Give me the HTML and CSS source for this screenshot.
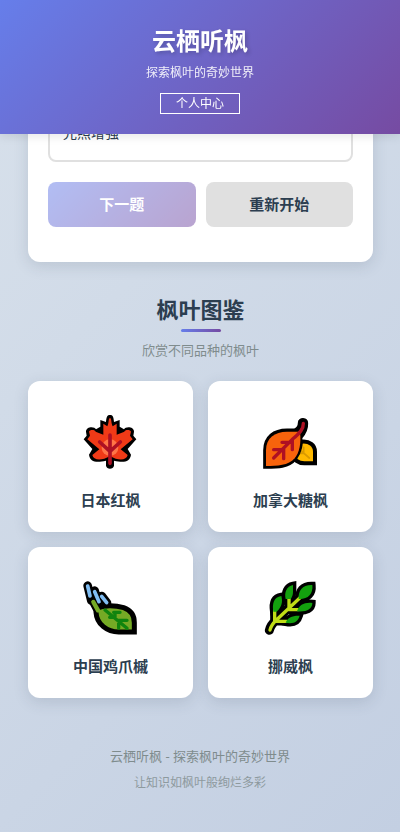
FILE: index.html
```html
<!DOCTYPE html>
<html lang="zh-CN">
<head>
    <meta charset="UTF-8">
    <meta name="viewport" content="width=device-width, initial-scale=1.0">
    <title>云栖听枫</title>
    <link rel="stylesheet" href="styles.css">
</head>
<body>
    <header class="header">
        <h1>云栖听枫</h1>
        <p>探索枫叶的奇妙世界</p>
        <a href="#" class="user-link">个人中心</a>
    </header>

    <main class="container">
        <section class="quiz-card">
            <div class="options">
                <button type="button" class="option">光照增强</button>
            </div>
            <div class="quiz-actions">
                <button type="button" class="btn btn-primary" disabled>下一题</button>
                <button type="button" class="btn btn-secondary">重新开始</button>
            </div>
        </section>

        <section class="gallery">
            <h2>枫叶图鉴</h2>
            <p class="subtitle">欣赏不同品种的枫叶</p>

            <div class="leaf-grid">
                <article class="leaf-card">
                    <svg class="leaf-icon" viewBox="39 39 168 168" aria-hidden="true">
                        <path d="M120 45 C128 45 131 50 132 66 L149 60 V80 L162 88 C166 79 192 79 192 95 L190 107 L199 118 L173 147 L183 164 C180 187 160 188 132 182 V197 C130 209 110 209 108 197 V182 C80 188 60 187 57 164 L67 147 L41 118 L50 107 L48 95 C48 79 74 79 78 88 L91 80 V60 L108 66 C109 50 112 45 120 45 Z" fill="#000"/>
                        <path d="M120 54 C125 54 123 70 128 79 L140 71 V104 L163 95 C164 88 182 88 183 95 L180 107 L188 118 L152 148 L173 165 C170 181 146 184 120 168 C94 184 70 181 67 165 L88 148 L52 118 L60 107 L57 95 C58 88 76 88 77 95 L100 104 V71 L112 79 C117 70 115 54 120 54 Z" fill="#f03a17"/>
                        <circle cx="120" cy="143" r="25" fill="#ff7547"/>
                        <path d="M120 105 V190 M89 126 L120 154 L151 126" fill="none" stroke="#ae1023" stroke-width="11" stroke-linecap="round" stroke-linejoin="round"/>
                    </svg>
                    <h3>日本红枫</h3>
                </article>

                <article class="leaf-card">
                    <svg class="leaf-icon" viewBox="39 39 168 168" aria-hidden="true">
                        <path d="M195 190 V155 C195 134 178 123 156 125 C139 127 130 143 130 162 C130 180 145 190 163 190 Z" fill="#ffb900" stroke="#000" stroke-width="12"/>
                        <path d="M145 145 L178 174 M161 142 V160 H145" fill="none" stroke="#d99a00" stroke-width="5" stroke-linecap="round"/>
                        <path d="M47 199 V151 C47 113 73 93 111 93 H134 C147 88 151 80 151 68 C151 59 167 59 167 70 C168 88 158 103 149 113 C154 129 148 157 134 175 C115 199 82 199 47 199 Z" fill="#000" stroke="#000" stroke-width="15"/>
                        <path d="M48 198 V151 C48 114 74 95 111 95 H150 C154 131 148 157 134 175 C115 197 82 198 48 198 Z" fill="#f7630c"/>
                        <path d="M160 70 C161 87 149 100 127 118 L71 174 M127 118 V149 M127 127 H96 M101 145 V176 M99 149 H71" fill="none" stroke="#ae1023" stroke-width="10" stroke-linecap="round" stroke-linejoin="round"/>
                    </svg>
                    <h3>加拿大糖枫</h3>
                </article>

                <article class="leaf-card">
                    <svg class="leaf-icon" viewBox="39 27 168 168" aria-hidden="true">
                        <path d="M53 47 L64 92 M74 62 L84 98 M95 78 L111 99" fill="none" stroke="#000" stroke-width="26" stroke-linecap="round"/>
                        <path d="M70 96 L82 119" stroke="#000" stroke-width="25" stroke-linecap="round"/>
                        <path d="M80 115 C101 105 134 105 161 113 C184 121 193 138 193 158 V186 H146 C112 186 80 163 78 127 Z" fill="#75aa25" stroke="#000" stroke-width="15"/>
                        <path d="M53 48 L60 78 M74 65 L87 95 M95 79 L110 98" fill="none" stroke="#80bdf2" stroke-width="11" stroke-linecap="round"/>
                        <path d="M70 96 L84 121" stroke="#75aa25" stroke-width="13" stroke-linecap="round"/>
                        <path d="M105 120 L171 175 M119 142 H135 V127 M131 127 H150 M146 174 V151 H171" fill="none" stroke="#10840e" stroke-width="10" stroke-linecap="round"/>
                    </svg>
                    <h3>中国鸡爪槭</h3>
                </article>

                <article class="leaf-card">
                    <svg class="leaf-icon" viewBox="39 27 168 168" aria-hidden="true">
                        <g fill="#000" stroke="#000" stroke-width="20">
                            <path d="M107 87 C102 68 110 48 129 45 V66 C129 79 119 87 107 87 Z"/>
                            <path d="M146 87 C144 62 157 44 187 45 C190 72 174 88 146 87 Z"/>
                            <path d="M70 125 C66 100 71 82 94 78 C99 96 95 111 83 122 Z"/>
                            <path d="M141 124 C147 104 165 96 187 99 C187 117 169 127 141 124 Z"/>
                            <path d="M107 158 C111 143 128 136 149 137 C144 155 131 163 107 158 Z"/>
                        </g>
                        <path d="M58 181 C61 166 69 158 80 148 L150 82 M117 85 V116 M112 119 H143 M74 121 V153 H110" fill="none" stroke="#000" stroke-width="27" stroke-linecap="round"/>
                        <path d="M60 180 C63 165 69 160 80 149 L150 83 M117 84 V113 M114 119 H144 M74 120 V154 H110" fill="none" stroke="#c0dc16" stroke-width="10" stroke-linecap="round"/>
                        <g fill="#13a10e">
                            <path d="M107 87 C102 68 110 48 129 45 V66 C129 79 122 87 122 87 Z"/>
                            <path d="M146 87 C144 62 157 44 187 45 C190 72 174 88 146 87 Z"/>
                            <path d="M70 125 C66 100 71 82 94 78 C99 96 95 111 80 125 Z"/>
                            <path d="M141 124 C147 104 165 96 187 99 C187 117 169 127 141 124 Z"/>
                            <path d="M107 158 C111 143 128 136 149 137 C144 155 131 163 107 158 Z"/>
                        </g>
                    </svg>
                    <h3>挪威枫</h3>
                </article>
            </div>
        </section>
    </main>

    <footer class="footer">
        <p>云栖听枫 - 探索枫叶的奇妙世界</p>
        <p class="footer-note">让知识如枫叶般绚烂多彩</p>
    </footer>
</body>
</html>
```
FILE: styles.css
```css
* {
    margin: 0;
    padding: 0;
    box-sizing: border-box;
}

body {
    font-family: "Noto Sans", "Noto Sans CJK SC", sans-serif;
    background: linear-gradient(135deg, #d8e1eb 0%, #c3cfe2 100%);
    color: #2c3e50;
    min-height: 100vh;
}

button {
    font-family: inherit;
    cursor: pointer;
}

/* Header stays on top while the page scrolls */
.header {
    position: fixed;
    top: 0;
    left: 0;
    right: 0;
    z-index: 100;
    padding: 22px 20px 20px;
    display: flex;
    flex-direction: column;
    align-items: center;
    background: linear-gradient(135deg, #667eea 0%, #764ba2 100%);
    box-shadow: 0 2px 10px rgba(0, 0, 0, 0.1);
    color: #fff;
}

.header h1 {
    font-size: 24px;
    line-height: 38px;
    margin-bottom: 4px;
    text-shadow: 2px 2px 4px rgba(0, 0, 0, 0.2);
}

.header p {
    font-size: 12px;
    line-height: 18px;
    margin-bottom: 11px;
    opacity: 0.9;
}

.user-link {
    padding: 0 15px;
    border: 1px solid #fff;
    font-size: 12px;
    line-height: 19px;
    color: #fff;
    text-decoration: none;
}

.container {
    padding: 86px 27px 0 28px;
}

/* Quiz */
.quiz-card {
    padding: 20px;
    background: #fff;
    border-radius: 12px;
    box-shadow: 0 4px 15px rgba(44, 62, 80, 0.15);
}

.options {
    margin-bottom: 20px;
}

.option {
    display: block;
    width: 100%;
    padding: 14px 13px 16px;
    background: #fff;
    border: 2px solid #e0e0e0;
    border-radius: 8px;
    font-size: 14px;
    line-height: 22px;
    color: #2c3e50;
    text-align: left;
}

.quiz-actions {
    display: flex;
    gap: 10px;
    margin-bottom: 15px;
}

.btn {
    flex: 1;
    padding: 12px;
    border: none;
    border-radius: 8px;
    font-size: 15px;
    line-height: 21px;
    font-weight: bold;
}

.btn-primary {
    background: linear-gradient(135deg, #667eea 0%, #764ba2 100%);
    color: #fff;
}

.btn-primary:disabled {
    opacity: 0.5;
    cursor: not-allowed;
}

.btn-secondary {
    background: #e0e0e0;
    color: #2c3e50;
}

/* Gallery */
.gallery {
    margin-top: 32px;
    text-align: center;
}

.gallery h2 {
    font-size: 22px;
    line-height: 30px;
}

.gallery h2::after {
    content: "";
    display: block;
    width: 40px;
    height: 3px;
    margin: 5px auto 8px;
    background: linear-gradient(90deg, #667eea, #764ba2);
    border-radius: 2px;
}

.subtitle {
    font-size: 13px;
    line-height: 20px;
    margin-bottom: 21px;
    color: #7f8c8d;
}

.leaf-grid {
    display: grid;
    grid-template-columns: repeat(2, 1fr);
    gap: 15px;
}

.leaf-card {
    padding: 32px 15px 20px;
    background: #fff;
    border-radius: 12px;
    box-shadow: 0 4px 15px rgba(44, 62, 80, 0.15);
}

.leaf-icon {
    display: block;
    width: 56px;
    height: 56px;
    margin: 0 auto 19px;
}

.leaf-card h3 {
    font-size: 15px;
    line-height: 24px;
}

/* Footer */
.footer {
    margin-top: 48px;
    padding-bottom: 39px;
    text-align: center;
    font-size: 13px;
    line-height: 20px;
    color: #7f8c8d;
}

.footer-note {
    margin-top: 7px;
    font-size: 12px;
    opacity: 0.8;
}
```
